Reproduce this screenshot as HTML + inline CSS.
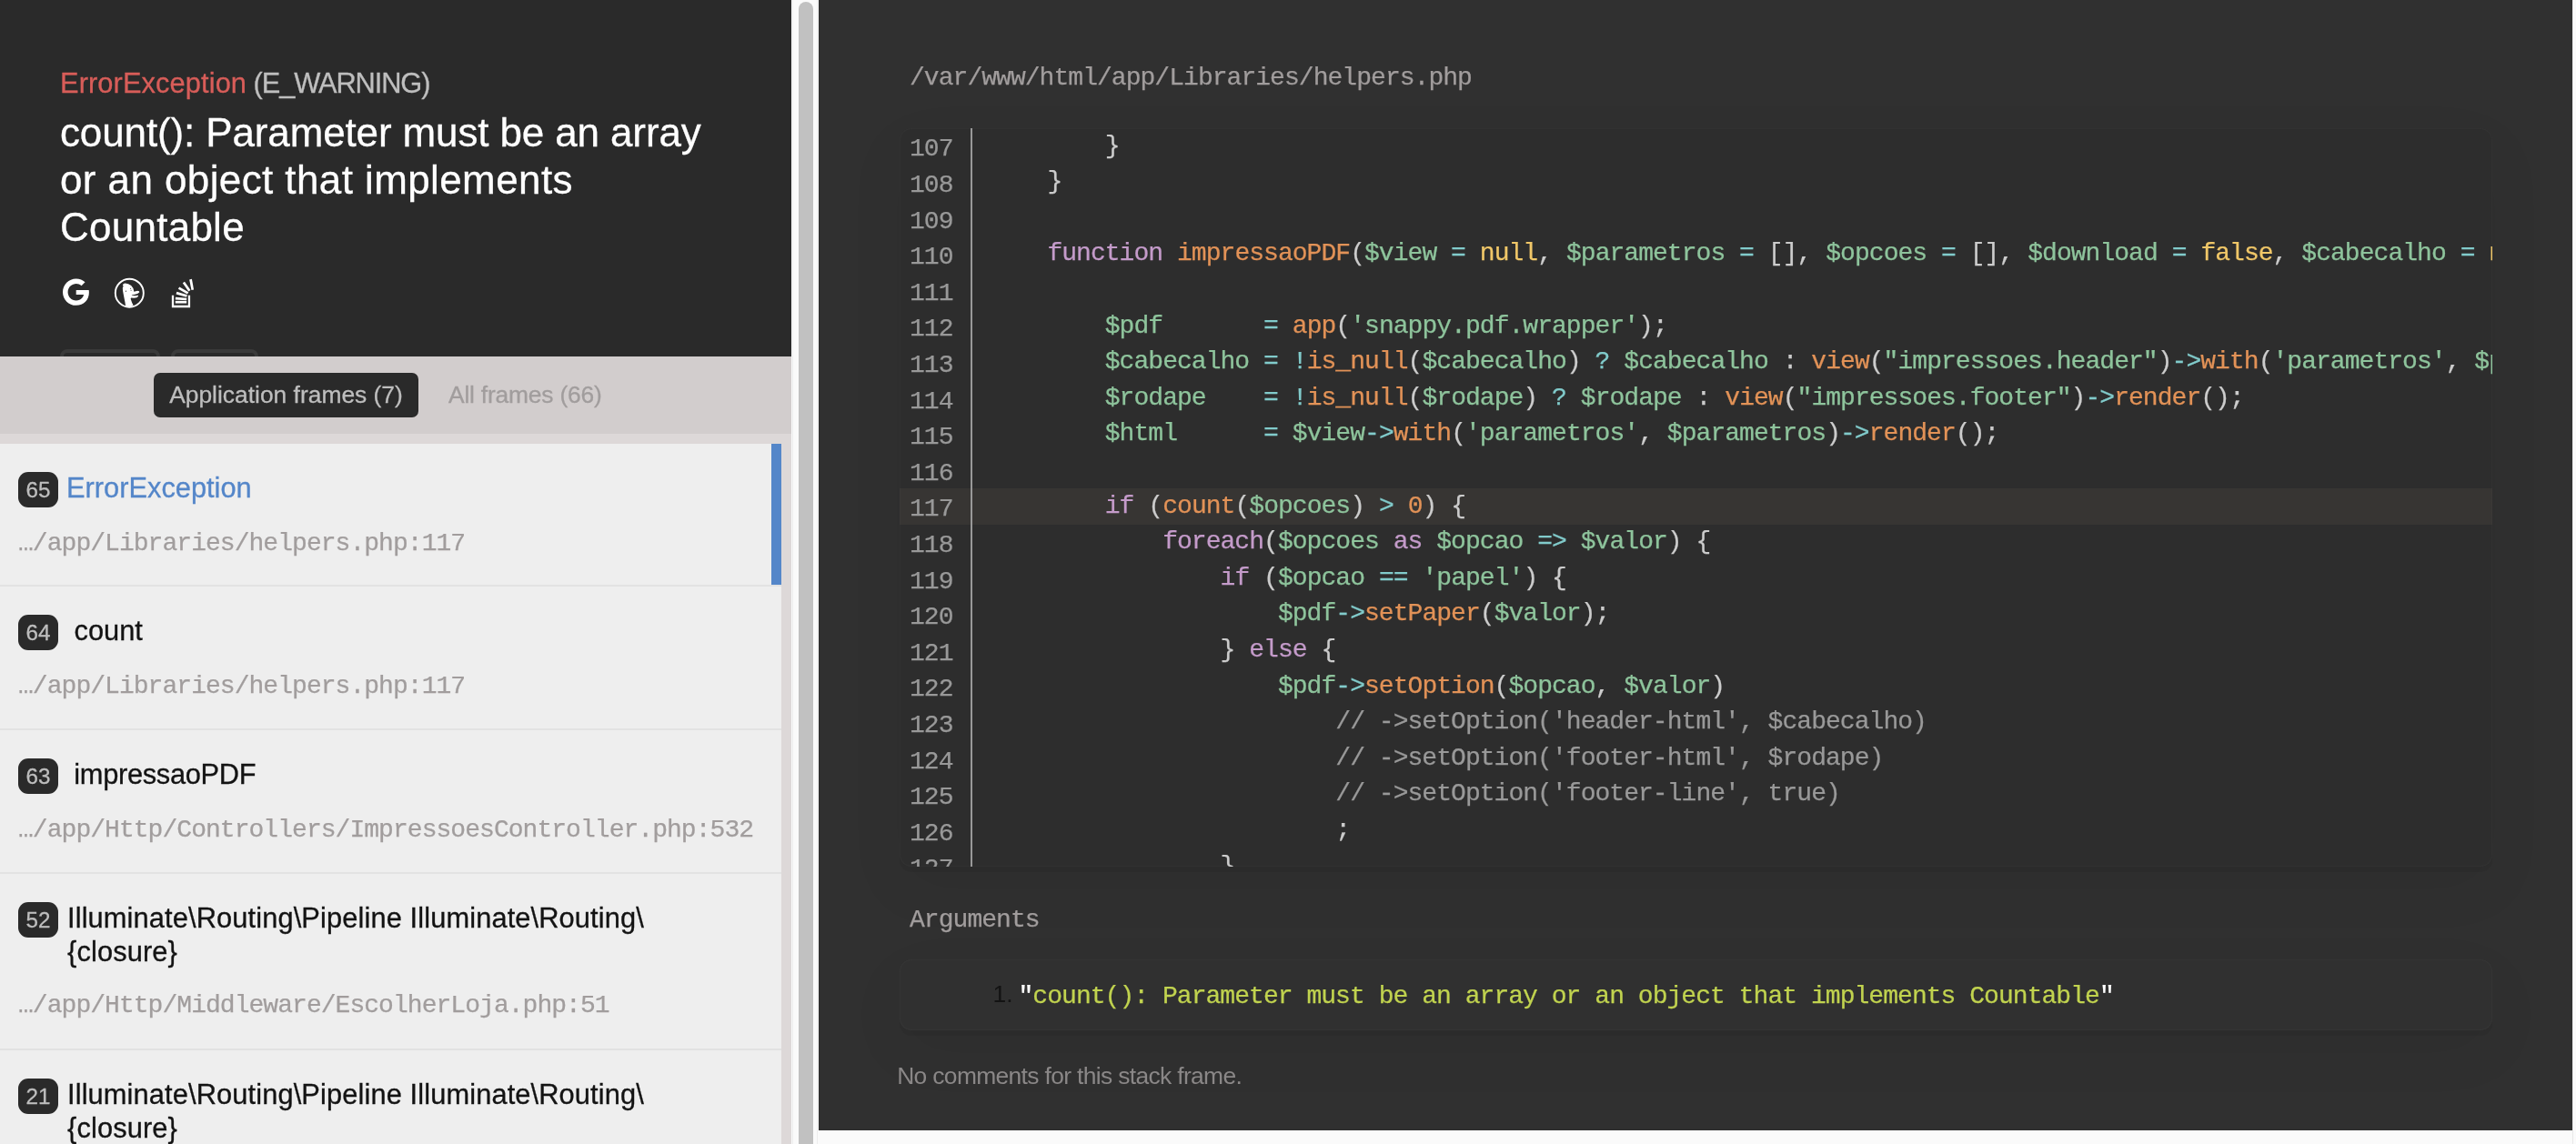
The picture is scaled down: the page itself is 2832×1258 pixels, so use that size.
<!DOCTYPE html>
<html lang="en">
<head>
<meta charset="utf-8">
<title>Whoops! There was an error.</title>
<style>
html,body{margin:0;padding:0;}
body{width:2832px;height:1258px;overflow:hidden;background:#fafafa;position:relative;
  font-family:"Liberation Sans",sans-serif;color:#131313;-webkit-font-smoothing:antialiased;}
.abs{position:absolute;white-space:nowrap;}
.mono{font-family:"Liberation Mono",monospace;}

/* ---------- left panel ---------- */
#left{position:absolute;left:0;top:0;width:870px;height:1258px;background:#ddd8d8;overflow:hidden;}
#hdr{position:absolute;left:0;top:0;width:870px;height:392px;background:#2a2a2a;overflow:hidden;}
#exc-title{left:66px;top:73.7px;font-size:30.8px;line-height:36px;color:#bebebe;letter-spacing:-1.1px;}
#exc-title b{font-weight:normal;color:#d85d59;}
#exc-msg{left:66px;top:120px;font-size:44px;line-height:51.9px;color:#ffffff;letter-spacing:0px;white-space:normal;width:760px;}
#exc-msg span{display:block;white-space:nowrap;}
.ico{position:absolute;}
.btn{position:absolute;top:384px;height:40px;border:4.4px solid #3a3a3a;border-radius:8px;box-sizing:border-box;color:#bebebe;font-size:26.4px;line-height:32px;text-align:center;overflow:hidden;}
#tabs{position:absolute;left:0;top:392px;width:870px;height:85px;background:#d2cdcd;}
#tab1{left:169px;top:410px;width:291px;height:49px;background:#2a2a2a;border-radius:7px;color:#bebebe;font-size:26.4px;line-height:49px;text-align:center;letter-spacing:0px;}
#tab2{left:493px;top:410px;height:49px;color:#a19d9d;font-size:26.4px;line-height:49px;letter-spacing:-0.2px;}
#tab1 span,#tab2 span{position:relative;top:0px;}
#frames{position:absolute;left:0;top:488px;width:859px;height:770px;background:#eeeeee;overflow:hidden;}
.fr{position:absolute;left:0;width:859px;box-sizing:border-box;border-bottom:2px solid #e2e2e2;}
.fr.act{box-shadow:inset -11px 0 0 0 #5486c9;}
.ix{position:absolute;left:20px;top:31px;width:44px;height:39px;border-radius:11px;background:#2a2a2a;color:#bebebe;font-size:24.2px;line-height:39px;text-align:center;}
.ix span{position:relative;top:0px;}
.nm{position:absolute;left:73px;top:29.8px;font-size:30.8px;line-height:37.4px;letter-spacing:0px;white-space:nowrap;color:#131313;}
.act .nm{color:#5486c9;}
.fl{position:absolute;left:20px;font-size:28px;letter-spacing:-0.958px;line-height:40px;color:#a19d9d;white-space:nowrap;}
.fl i{font-style:normal;font-family:"Liberation Sans",sans-serif;letter-spacing:0;display:inline-block;width:15.84px;}

/* ---------- scrollbar ---------- */
#sb{position:absolute;left:870px;top:0;width:30px;height:1258px;background:#fafafa;box-sizing:border-box;border-left:1px solid #e8e8e8;border-right:1px solid #e8e8e8;}
#sbt{position:absolute;left:878px;top:2px;width:16px;height:1400px;border-radius:8px;background:#c1c1c1;}
#sb2{position:absolute;left:2828px;top:0;width:4px;height:1258px;background:#fafafa;border-left:1px solid #e8e8e8;box-sizing:border-box;}

/* ---------- right panel ---------- */
#right{position:absolute;left:900px;top:0;width:1928px;height:1243px;background:#303030;overflow:hidden;}
#fpath{left:100px;top:65.94px;font-size:28px;letter-spacing:-0.958px;line-height:40px;color:#a19d9d;}
#code{position:absolute;left:88.5px;top:141px;width:1751.5px;height:811.5px;background:#2d2d2d;border-radius:13px;overflow:hidden;
  box-shadow:0 6px 0 rgba(0,0,0,.05),0 22px 66px rgba(0,0,0,.05);}
#code:after,#args:after{content:"";position:absolute;left:0;top:0;right:0;bottom:0;border-radius:13px;box-shadow:inset 0 0 2px 0 rgba(255,255,255,.1);pointer-events:none;}
#gut{position:absolute;left:78.5px;top:0;width:2px;height:100%;background:#999999;}
.ln{position:absolute;left:0;width:100%;height:39.6px;line-height:39.6px;white-space:pre;font-family:"Liberation Mono",monospace;font-size:28px;letter-spacing:-0.958px;color:#cccccc;}
.hl{background:rgba(148,123,105,.1);}
.no{position:absolute;left:0;width:59px;text-align:right;color:#999999;top:3.44px;}
.cd{position:absolute;left:99.5px;top:-0.41px;}
.k{color:#c49bca}.f{color:#e29257}.v,.s{color:#8ec49c}.o{color:#81cbcb}.n{color:#f0c768}.p{color:#cccccc}.c{color:#999999}
#argt{left:100px;top:991.54px;font-size:28px;letter-spacing:-0.958px;line-height:40px;color:#a19d9d;}
#args{position:absolute;left:88.5px;top:1054.5px;width:1751.5px;height:78px;background:#303030;border-radius:13px;overflow:hidden;
  box-shadow:0 6px 0 rgba(0,0,0,.05),0 22px 66px rgba(0,0,0,.05);}
#argn{left:103px;top:18px;font-size:26.4px;line-height:40px;color:#131313;}
#argv{left:131px;top:21.04px;font-size:28px;letter-spacing:-0.958px;line-height:40px;color:#ffffff;}
#argv b{font-weight:normal;color:#c1d34f;}
#nocom{left:86.2px;top:1163px;font-size:26.4px;line-height:40px;color:#8a8787;letter-spacing:-0.65px;}
#sb{box-shadow:inset 1px 0 0 #fafafa,inset 2px 0 0 #ececec,inset -1px 0 0 #fafafa,inset -2px 0 0 #ececec;border:0 !important;}
#exc-title,#exc-msg,#tab1,#tab2,.nm,.ix{-webkit-text-stroke:0.3px currentColor;}
.mono,.ln{-webkit-text-stroke:0.25px currentColor;}
/*GRAYAA*/
#left,#right{will-change:transform;}
</style>
</head>
<body>

<div id="left">
  <div id="hdr">
    <div class="abs" id="exc-title"><b style="letter-spacing:0.1px">ErrorException</b> (E_WARNING)</div>
    <div class="abs" id="exc-msg"><span style="letter-spacing:-0.13px">count(): Parameter must be an array</span><span style="letter-spacing:0.4px">or an object that implements</span><span style="letter-spacing:0.25px">Countable</span></div>
    <svg class="ico" style="left:69.24px;top:306.4px" width="28.9" height="30.32" viewBox="0 0 488 512"><path fill="#ffffff" d="M488 261.8C488 403.3 391.1 504 248 504 110.8 504 0 393.2 0 256S110.8 8 248 8c66.8 0 123 24.5 166.3 64.9l-67.5 64.9C258.5 52.6 94.3 116.6 94.3 256c0 86.5 69.1 156.6 153.7 156.6 98.2 0 135-70.4 140.8-106.9H248v-85.3h236.1c2.3 12.7 3.9 24.9 3.9 41.4z"/></svg>
    <svg class="ico" style="left:120px;top:300px" width="45" height="45" viewBox="0 0 1144 1144"><circle cx="567" cy="565" r="394" fill="none" stroke="#ffffff" stroke-width="48"/><path fill="#ffffff" d="M380 352 L400 305 L450 290 L535 310 L615 358 L672 430 L695 526 L790 504 L840 512 L845 545 L790 582 L700 608 L628 618 L640 630 L720 640 L808 630 L815 655 L772 692 L690 708 L615 696 L600 722 L638 830 L675 912 L600 952 L520 957 L460 932 L443 820 L408 640 L382 500 L377 420 L398 378 Z"/><circle cx="468" cy="512" r="15" fill="#2a2a2a"/><circle cx="600" cy="440" r="13" fill="#2a2a2a"/><circle cx="612" cy="492" r="13" fill="#2a2a2a"/></svg>
    <svg class="ico" style="left:180px;top:300px" width="45" height="45" viewBox="0 0 1144 1144"><g fill="#ffffff"><path d="M225 630h58v282h399V630h58v340H225z"/><path d="M325 785h315v68H325z"/><path d="M330 683l312 22-4 66-312-22z"/><path d="M365 530l292 84-20 66-292-84z"/><path d="M438 392l256 148-34 58-256-148z"/><path d="M585 248l164 236-56 40-164-236z"/><path d="M786 174l54 298-66 14-58-296z"/></g></svg>
    <div class="btn" style="left:66px;width:110px;">COPY</div>
    <div class="btn" style="left:188px;width:96px;">HIDE</div>
  </div>
  <div id="tabs"></div>
  <div class="abs" id="tab1"><span>Application frames (7)</span></div>
  <div class="abs" id="tab2"><span>All frames (66)</span></div>
  <div id="frames">
    <div class="fr act" style="top:0;height:157px;">
      <div class="ix"><span>65</span></div>
      <div class="nm">ErrorException</div>
      <div class="fl mono" style="top:89.94px;">…/app/Libraries/helpers.php:117</div>
    </div>
    <div class="fr" style="top:157px;height:158px;">
      <div class="ix"><span>64</span></div>
      <div class="nm">&nbsp;count</div>
      <div class="fl mono" style="top:89.94px;">…/app/Libraries/helpers.php:117</div>
    </div>
    <div class="fr" style="top:315px;height:158px;">
      <div class="ix"><span>63</span></div>
      <div class="nm" style="letter-spacing:-0.3px">&nbsp;impressaoPDF</div>
      <div class="fl mono" style="top:89.94px;">…/app/Http/Controllers/ImpressoesController.php:532</div>
    </div>
    <div class="fr" style="top:473px;height:194px;">
      <div class="ix"><span>52</span></div>
      <div class="nm" style="left:74px;letter-spacing:0.12px">Illuminate\Routing\Pipeline Illuminate\Routing\<br>{closure}</div>
      <div class="fl mono" style="top:125.34px;">…/app/Http/Middleware/EscolherLoja.php:51</div>
    </div>
    <div class="fr" style="top:667px;height:194px;">
      <div class="ix"><span>21</span></div>
      <div class="nm" style="left:74px;letter-spacing:0.12px">Illuminate\Routing\Pipeline Illuminate\Routing\<br>{closure}</div>
      <div class="fl mono" style="top:125.34px;">…/app/Http/Middleware/Authenticate.php:47</div>
    </div>
  </div>
</div>

<div id="sb"></div><div id="sbt"></div>

<div id="right">
  <div class="abs mono" id="fpath">/var/www/html/app/Libraries/helpers.php</div>
  <div id="code">
<div class="ln" style="top:0.0px"><span class="no">107</span><span class="cd">        <span class="p">}</span></span></div>
<div class="ln" style="top:39.6px"><span class="no">108</span><span class="cd">    <span class="p">}</span></span></div>
<div class="ln" style="top:79.2px"><span class="no">109</span><span class="cd"></span></div>
<div class="ln" style="top:118.8px"><span class="no">110</span><span class="cd">    <span class="k">function</span> <span class="f">impressaoPDF</span><span class="p">(</span><span class="v">$view</span> <span class="o">=</span> <span class="n">null</span><span class="p">,</span> <span class="v">$parametros</span> <span class="o">=</span> <span class="p">[</span><span class="p">]</span><span class="p">,</span> <span class="v">$opcoes</span> <span class="o">=</span> <span class="p">[</span><span class="p">]</span><span class="p">,</span> <span class="v">$download</span> <span class="o">=</span> <span class="n">false</span><span class="p">,</span> <span class="v">$cabecalho</span> <span class="o">=</span> <span class="n">null</span><span class="p">,</span> <span class="v">$rodape</span> <span class="o">=</span> <span class="n">null</span><span class="p">)</span></span></div>
<div class="ln" style="top:158.4px"><span class="no">111</span><span class="cd"></span></div>
<div class="ln" style="top:198.0px"><span class="no">112</span><span class="cd">        <span class="v">$pdf</span>       <span class="o">=</span> <span class="f">app</span><span class="p">(</span><span class="s">'snappy.pdf.wrapper'</span><span class="p">)</span><span class="p">;</span></span></div>
<div class="ln" style="top:237.6px"><span class="no">113</span><span class="cd">        <span class="v">$cabecalho</span> <span class="o">=</span> <span class="o">!</span><span class="f">is_null</span><span class="p">(</span><span class="v">$cabecalho</span><span class="p">)</span> <span class="o">?</span> <span class="v">$cabecalho</span> <span class="p">:</span> <span class="f">view</span><span class="p">(</span><span class="s">"impressoes.header"</span><span class="p">)</span><span class="o">-&gt;</span><span class="f">with</span><span class="p">(</span><span class="s">'parametros'</span><span class="p">,</span> <span class="v">$parametros</span><span class="p">)</span><span class="o">-&gt;</span><span class="f">render</span><span class="p">(</span><span class="p">)</span><span class="p">;</span></span></div>
<div class="ln" style="top:277.2px"><span class="no">114</span><span class="cd">        <span class="v">$rodape</span>    <span class="o">=</span> <span class="o">!</span><span class="f">is_null</span><span class="p">(</span><span class="v">$rodape</span><span class="p">)</span> <span class="o">?</span> <span class="v">$rodape</span> <span class="p">:</span> <span class="f">view</span><span class="p">(</span><span class="s">"impressoes.footer"</span><span class="p">)</span><span class="o">-&gt;</span><span class="f">render</span><span class="p">(</span><span class="p">)</span><span class="p">;</span></span></div>
<div class="ln" style="top:316.8px"><span class="no">115</span><span class="cd">        <span class="v">$html</span>      <span class="o">=</span> <span class="v">$view</span><span class="o">-&gt;</span><span class="f">with</span><span class="p">(</span><span class="s">'parametros'</span><span class="p">,</span> <span class="v">$parametros</span><span class="p">)</span><span class="o">-&gt;</span><span class="f">render</span><span class="p">(</span><span class="p">)</span><span class="p">;</span></span></div>
<div class="ln" style="top:356.4px"><span class="no">116</span><span class="cd"></span></div>
<div class="ln hl" style="top:396.0px"><span class="no">117</span><span class="cd">        <span class="k">if</span> <span class="p">(</span><span class="f">count</span><span class="p">(</span><span class="v">$opcoes</span><span class="p">)</span> <span class="o">&gt;</span> <span class="f">0</span><span class="p">)</span> <span class="p">{</span></span></div>
<div class="ln" style="top:435.6px"><span class="no">118</span><span class="cd">            <span class="k">foreach</span><span class="p">(</span><span class="v">$opcoes</span> <span class="k">as</span> <span class="v">$opcao</span> <span class="o">=&gt;</span> <span class="v">$valor</span><span class="p">)</span> <span class="p">{</span></span></div>
<div class="ln" style="top:475.2px"><span class="no">119</span><span class="cd">                <span class="k">if</span> <span class="p">(</span><span class="v">$opcao</span> <span class="o">==</span> <span class="s">'papel'</span><span class="p">)</span> <span class="p">{</span></span></div>
<div class="ln" style="top:514.8px"><span class="no">120</span><span class="cd">                    <span class="v">$pdf</span><span class="o">-&gt;</span><span class="f">setPaper</span><span class="p">(</span><span class="v">$valor</span><span class="p">)</span><span class="p">;</span></span></div>
<div class="ln" style="top:554.4px"><span class="no">121</span><span class="cd">                <span class="p">}</span> <span class="k">else</span> <span class="p">{</span></span></div>
<div class="ln" style="top:594.0px"><span class="no">122</span><span class="cd">                    <span class="v">$pdf</span><span class="o">-&gt;</span><span class="f">setOption</span><span class="p">(</span><span class="v">$opcao</span><span class="p">,</span> <span class="v">$valor</span><span class="p">)</span></span></div>
<div class="ln" style="top:633.6px"><span class="no">123</span><span class="cd">                        <span class="c">// -&gt;setOption('header-html', $cabecalho)</span></span></div>
<div class="ln" style="top:673.2px"><span class="no">124</span><span class="cd">                        <span class="c">// -&gt;setOption('footer-html', $rodape)</span></span></div>
<div class="ln" style="top:712.8px"><span class="no">125</span><span class="cd">                        <span class="c">// -&gt;setOption('footer-line', true)</span></span></div>
<div class="ln" style="top:752.4px"><span class="no">126</span><span class="cd">                        <span class="p">;</span></span></div>
<div class="ln" style="top:792.0px"><span class="no">127</span><span class="cd">                <span class="p">}</span></span></div>
    <div id="gut"></div>
  </div>
  <div class="abs mono" id="argt">Arguments</div>
  <div id="args">
    <div class="abs" id="argn">1.</div>
    <div class="abs mono" id="argv">"<b>count(): Parameter must be an array or an object that implements Countable</b>"</div>
  </div>
  <div class="abs" id="nocom">No comments for this stack frame.</div>
</div>
<div id="sb2"></div>

</body>
</html>
